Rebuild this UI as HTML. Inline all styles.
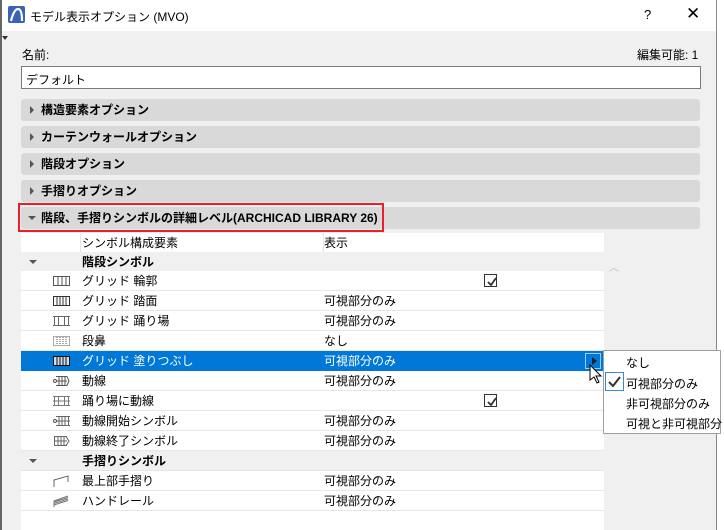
<!DOCTYPE html>
<html><head><meta charset="utf-8"><style>
*{margin:0;padding:0;box-sizing:border-box}
body{width:724px;height:530px;overflow:hidden;background:#fff;font-family:"Liberation Sans","Noto Sans CJK JP",sans-serif;font-size:12px;color:#000;position:relative}
.a{position:absolute}
.bar{position:absolute;left:21px;width:679px;height:22px;background:#d9d9d9;border-radius:3px;font-weight:bold;line-height:22px;padding-left:20px}
.bar:before{content:"";position:absolute;left:9px;top:7px;border-left:4px solid #555;border-top:4px solid transparent;border-bottom:4px solid transparent}
.bar.open:before{left:7px;top:9px;border-top:4px solid #555;border-left:4px solid transparent;border-right:4px solid transparent;border-bottom:0}
.row{position:absolute;left:21px;width:583px;height:20px;border-bottom:1px solid #e6e6e6;line-height:21px;background:#fff}
.row .n{position:absolute;left:61px}
.row .v{position:absolute;left:303px}
.row svg{position:absolute;left:32px;top:5px}
.grp{background:#f0f0f0;font-weight:bold}
.grp:before{content:"";position:absolute;left:8px;top:8px;border-top:4px solid #555;border-left:4px solid transparent;border-right:4px solid transparent}
.cb{position:absolute;left:463px;top:3px;width:13px;height:13px;border:1px solid #333;background:#fff}
.sel{background:#0078d7;color:#fff;border-bottom-color:#0078d7}
</style></head><body>
<div class="a" style="left:0;top:0;width:724px;height:530px;border-left:2px solid #666"></div>
<svg class="a" style="left:8px;top:6px" width="17" height="17"><rect width="17" height="17" rx="2" fill="#3a62b8"/><path d="M3 15 Q6 3 10 3 Q14 3 14 15" stroke="#fff" stroke-width="2.2" fill="none"/></svg>
<div class="a" style="left:30px;top:8px;font-size:12px">モデル表示オプション (MVO)</div>
<div class="a" style="left:644px;top:7px;font-size:13px">?</div>
<div class="a" style="left:686px;top:4px;font-size:17px;font-weight:lighter">✕</div>
<div class="a" style="left:2px;top:31px;width:714px;height:499px;background:#f0f0f0"></div>
<div class="a" style="left:716px;top:0;width:1px;height:530px;background:#888"></div>
<div class="a" style="left:717px;top:0;width:7px;height:530px;background:#fff"></div>
<div class="a" style="left:2px;top:36px;border-top:4px solid #333;border-left:3px solid transparent;border-right:3px solid transparent"></div>
<div class="a" style="left:22px;top:46px">名前:</div>
<div class="a" style="left:637px;top:46px">編集可能: 1</div>
<div class="a" style="left:21px;top:66px;width:680px;height:23px;background:#fff;border:1px solid #7a7a7a;padding:4px 4px">デフォルト</div>
<div class="bar" style="top:99px">構造要素オプション</div>
<div class="bar" style="top:126px">カーテンウォールオプション</div>
<div class="bar" style="top:153px">階段オプション</div>
<div class="bar" style="top:180px">手摺りオプション</div>
<div class="bar open" style="top:207px">階段、手摺りシンボルの詳細レベル(ARCHICAD LIBRARY 26)</div>
<div class="a" style="left:18px;top:203px;width:366px;height:29px;border:2px solid #e8202a"></div>
<div class="a" style="left:21px;top:233px;width:583px;height:297px;background:#fff"></div>
<div class="row" style="top:233px;height:19px;border-bottom:none"><span class="n">シンボル構成要素</span><span class="v">表示</span></div>
<div class="a" style="left:80px;top:233px;width:1px;height:19px;background:#e6e6e6"></div>
<div class="a" style="left:323px;top:233px;width:1px;height:19px;background:#e6e6e6"></div>
<div class="row grp" style="top:252px"><span class="n">階段シンボル</span></div>
<div class="row" style="top:271px"><svg width="17" height="10"><rect x=".5" y=".5" width="16" height="9" fill="none" stroke="#555"/><path d="M5 1v8M9 1v8M13 1v8" stroke="#555"/></svg><span class="n">グリッド 輪郭</span><div class="cb"><svg style="left:1px;top:1px" width="11" height="11"><path d="M2 6l3 3 5-7" stroke="#333" stroke-width="1.8" fill="none"/></svg></div></div>
<div class="row" style="top:291px"><svg width="17" height="10"><rect x=".5" y=".5" width="16" height="9" fill="none" stroke="#333"/><path d="M4 1v8M7 1v8M10 1v8M13 1v8" stroke="#333"/></svg><span class="n">グリッド 踏面</span><span class="v">可視部分のみ</span></div>
<div class="row" style="top:311px"><svg width="17" height="10"><path d="M0 .5h17M0 9.5h17M1.5 0v10M5.5 0v10M11.5 0v10M15.5 0v10" stroke="#666"/></svg><span class="n">グリッド 踊り場</span><span class="v">可視部分のみ</span></div>
<div class="row" style="top:331px"><svg width="17" height="10"><rect x=".5" y=".5" width="16" height="9" fill="none" stroke="#555" stroke-dasharray="1 1"/><path d="M4 1v8M7 1v8M10 1v8M13 1v8" stroke="#555" stroke-dasharray="1 1"/></svg><span class="n">段鼻</span><span class="v">なし</span></div>
<div class="row sel" style="top:351px"><svg width="17" height="10"><rect x=".5" y=".5" width="16" height="9" fill="#cde" stroke="#111"/><path d="M4 1v8M7 1v8M10 1v8M13 1v8" stroke="#111"/></svg><span class="n">グリッド 塗りつぶし</span><span class="v">可視部分のみ</span>
<div class="a" style="left:564px;top:2px;width:16px;height:16px;border:1px solid #9cf;background:#0078d7"><div class="a" style="left:6px;top:3px;border-left:5px solid #222;border-top:4px solid transparent;border-bottom:4px solid transparent"></div></div></div>
<div class="row" style="top:371px"><svg width="17" height="10"><path d="M3 .5h11M3 9.5h11M3 5h11M6 0v10M9 0v10M12 0v10M14 .5l2 4.5-2 4.5" stroke="#555" fill="none"/><circle cx="2" cy="5" r="1.5" fill="none" stroke="#555"/></svg><span class="n">動線</span><span class="v">可視部分のみ</span></div>
<div class="row" style="top:391px"><svg width="17" height="10"><path d="M0 .5h17M0 9.5h17M0 5h17M1.5 0v10M5.5 0v10M11.5 0v10M15.5 0v10" stroke="#777"/></svg><span class="n">踊り場に動線</span><div class="cb"><svg style="left:1px;top:1px" width="11" height="11"><path d="M2 6l3 3 5-7" stroke="#333" stroke-width="1.8" fill="none"/></svg></div></div>
<div class="row" style="top:411px"><svg width="17" height="10"><path d="M3 .5h14M3 9.5h14M3 5h14M6 0v10M9 0v10M12 0v10M15.5 0v10" stroke="#666" fill="none"/><circle cx="2" cy="5" r="1.5" fill="none" stroke="#555"/></svg><span class="n">動線開始シンボル</span><span class="v">可視部分のみ</span></div>
<div class="row" style="top:431px"><svg width="17" height="10"><path d="M1 .5h13M1 9.5h13M1 5h13M1.5 0v10M5 0v10M8 0v10M11 0v10M13 .5l3 4.5-3 4.5" stroke="#666" fill="none"/></svg><span class="n">動線終了シンボル</span><span class="v">可視部分のみ</span></div>
<div class="row grp" style="top:451px"><span class="n">手摺りシンボル</span></div>
<div class="row" style="top:471px"><svg width="17" height="12" style="top:4px"><path d="M1 12V5L15 1v6" stroke="#666" fill="none"/></svg><span class="n">最上部手摺り</span><span class="v">可視部分のみ</span></div>
<div class="row" style="top:491px"><svg width="17" height="12" style="top:4px"><path d="M1 12V6L15 1M1 7L15 2.5M1 8.5L15 4M1 10L15 5.5" stroke="#777" fill="none"/></svg><span class="n">ハンドレール</span><span class="v">可視部分のみ</span></div>
<div class="a" style="left:609px;top:259px;color:#bbb;font-size:10px">︿</div>
<div class="a" style="left:603px;top:350px;width:118px;height:84px;background:#fff;border:1px solid #a0a0a0"></div>
<div class="a" style="left:605px;top:372px;width:19px;height:19px;border:1px solid #3a88d8"><svg width="17" height="17"><path d="M3 9l4 4 7-9" stroke="#333" stroke-width="2" fill="none"/></svg></div>
<div class="a" style="left:626px;top:354px">なし</div>
<div class="a" style="left:626px;top:375px">可視部分のみ</div>
<div class="a" style="left:626px;top:395px">非可視部分のみ</div>
<div class="a" style="left:626px;top:415px">可視と非可視部分</div>
<svg class="a" style="left:589px;top:364px" width="14" height="20"><path d="M1 1v15l4-3 3 6 2-1-3-6h5z" fill="#fff" stroke="#000"/></svg>
</body></html>
